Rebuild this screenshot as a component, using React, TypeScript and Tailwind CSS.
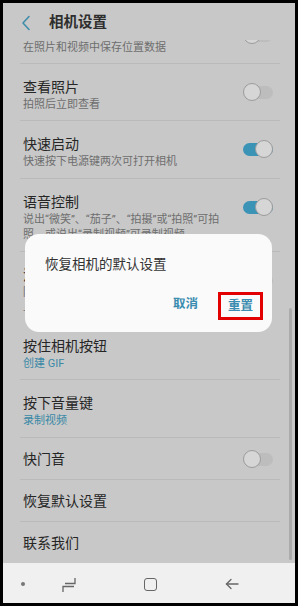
import React from "react";

function Toggle({ on }: { on: boolean }) {
  return (
    <div className="relative w-[30px] h-[18px] shrink-0">
      <div
        className={
          "absolute left-0 right-0 top-[2.5px] h-[13px] rounded-full " +
          (on ? "bg-[#3b93b6]" : "bg-[#bdbdbd]")
        }
      />
      <div
        className={
          "absolute top-0 w-[18px] h-[18px] rounded-full bg-[#d6d6d6] border border-[#9c9c9c] " +
          (on ? "right-0" : "left-0")
        }
      />
    </div>
  );
}

function Divider() {
  return <div className="h-px bg-[#bababa] ml-[17px] mr-[15px]" />;
}

function Row({
  title,
  sub,
  toggle,
  teal,
  pb = "pb-[8px]",
}: {
  title: string;
  sub: React.ReactNode;
  toggle?: boolean;
  teal?: boolean;
  pb?: string;
}) {
  return (
    <div className={"flex items-start pl-[20px] pr-[22px] pt-[13px] " + pb}>
      <div className="flex-1 min-w-0">
        <div className="text-[14px] leading-[20px] text-[#262626]">{title}</div>
        <div
          className={
            "text-[11px] leading-[15px] " +
            (teal ? "text-[#3a88a6]" : "text-[#6e6e6e]")
          }
        >
          {sub}
        </div>
      </div>
      {toggle !== undefined && (
        <div className="mt-[6px] ml-2">
          <Toggle on={toggle} />
        </div>
      )}
    </div>
  );
}

function SingleRow({ title, toggle }: { title: string; toggle?: boolean }) {
  return (
    <div className="flex items-center h-[41px] pl-[20px] pr-[22px] pt-[1px]">
      <div className="flex-1 text-[14px] leading-[20px] text-[#262626]">{title}</div>
      {toggle !== undefined && <Toggle on={toggle} />}
    </div>
  );
}

export default function App() {
  return (
    <div className="w-[298px] h-[606px] bg-black pt-[3px] pl-[3px] pr-[3px] pb-[3px] font-[Roboto,'Noto_Sans_CJK_SC',sans-serif]">
      <div className="relative w-full h-full bg-[#c8c8c8] flex flex-col overflow-hidden">
        {/* header */}
        <div className="relative z-10 h-[37px] shrink-0 bg-[#c8c8c8] flex items-center pt-[2px]">
          <svg
            className="ml-[18px]"
            width="10"
            height="16"
            viewBox="0 0 10 16"
            fill="none"
          >
            <path
              d="M8 1.5 L2 8 L8 14.5"
              stroke="#3f8cab"
              strokeWidth="1.6"
              strokeLinecap="round"
              strokeLinejoin="round"
            />
          </svg>
          <div className="ml-[18px] text-[14.5px] font-bold text-[#2e2e2e] leading-[20px]">
            相机设置
          </div>
        </div>

        {/* list */}
        <div className="flex-1 overflow-hidden">
          <div className="-mt-[33px]">
            <Row title="位置标签" sub="在照片和视频中保存位置数据" toggle={false} />
            <Divider />
            <Row title="查看照片" sub="拍照后立即查看" toggle={false} />
            <Divider />
            <Row title="快速启动" sub="快速按下电源键两次可打开相机" toggle={true} pb="pb-[9px]" />
            <Divider />
            <Row
              title="语音控制"
              sub={
                <>
                  说出“微笑”、“茄子”、“拍摄”或“拍照”可拍
                  <br />
                  照，或说出“录制视频”可录制视频
                </>
              }
              toggle={true}
              pb="pb-[9px]"
            />
            <Divider />
            <Row
              title="浮动相机按钮"
              sub={
                <>
                  除了屏幕底部的相机按钮之外，在屏幕
                  <br />
                  上添加一个可移动的相机按钮。
                </>
              }
              toggle={false}
              pb="pb-[8px]"
            />
            <Row title="按住相机按钮" sub="创建 GIF" teal />
            <Divider />
            <Row title="按下音量键" sub="录制视频" teal pb="pb-[9px]" />
            <Divider />
            <SingleRow title="快门音" toggle={false} />
            <Divider />
            <SingleRow title="恢复默认设置" />
            <Divider />
            <SingleRow title="联系我们" />
          </div>
        </div>

        {/* nav bar */}
        <div className="h-[40px] shrink-0 bg-[#f0f0f0] relative flex items-center">
          <div className="absolute left-[18px] top-[19px] w-[4px] h-[4px] rounded-full bg-[#777]" />
          <svg
            className="absolute left-[58px] top-[14px]"
            width="16"
            height="16"
            viewBox="0 0 16 16"
            fill="none"
            stroke="#666"
            strokeWidth="1.3"
          >
            <path d="M14 1 V6.5 H4" />
            <path d="M13 9.5 H2 V15" />
          </svg>
          <div className="absolute left-[141px] top-[15px] w-[13px] h-[13px] rounded-[3px] border-[1.5px] border-[#666]" />
          <svg
            className="absolute left-[222px] top-[14px]"
            width="14"
            height="14"
            viewBox="0 0 14 14"
            fill="none"
            stroke="#666"
            strokeWidth="1.3"
            strokeLinecap="round"
          >
            <path d="M13 7 H1.5" />
            <path d="M6 2.5 L1.5 7 L6 11.5" />
          </svg>
        </div>

        {/* scrollbar */}
        <div className="absolute left-[286px] top-[305px] w-[3px] h-[252px] rounded-full bg-[#acacac]" />

        {/* dialog */}
        <div className="absolute left-[22px] top-[231px] w-[247px] h-[98px] rounded-[14px] bg-[#fafafa] z-20">
          <div className="absolute left-[20px] top-[21px] text-[13.5px] leading-[18px] text-[#333]">
            恢复相机的默认设置
          </div>
          <div className="absolute left-[148px] top-[62px] text-[12.5px] leading-[16px] font-bold text-[#3a8db0]">
            取消
          </div>
          <div className="absolute left-[193px] top-[58px] w-[45px] h-[28px] border-[3px] border-[#e30000] flex items-center justify-center">
            <span className="text-[12.5px] leading-[16px] font-bold text-[#3a8db0]">重置</span>
          </div>
        </div>
      </div>
    </div>
  );
}
